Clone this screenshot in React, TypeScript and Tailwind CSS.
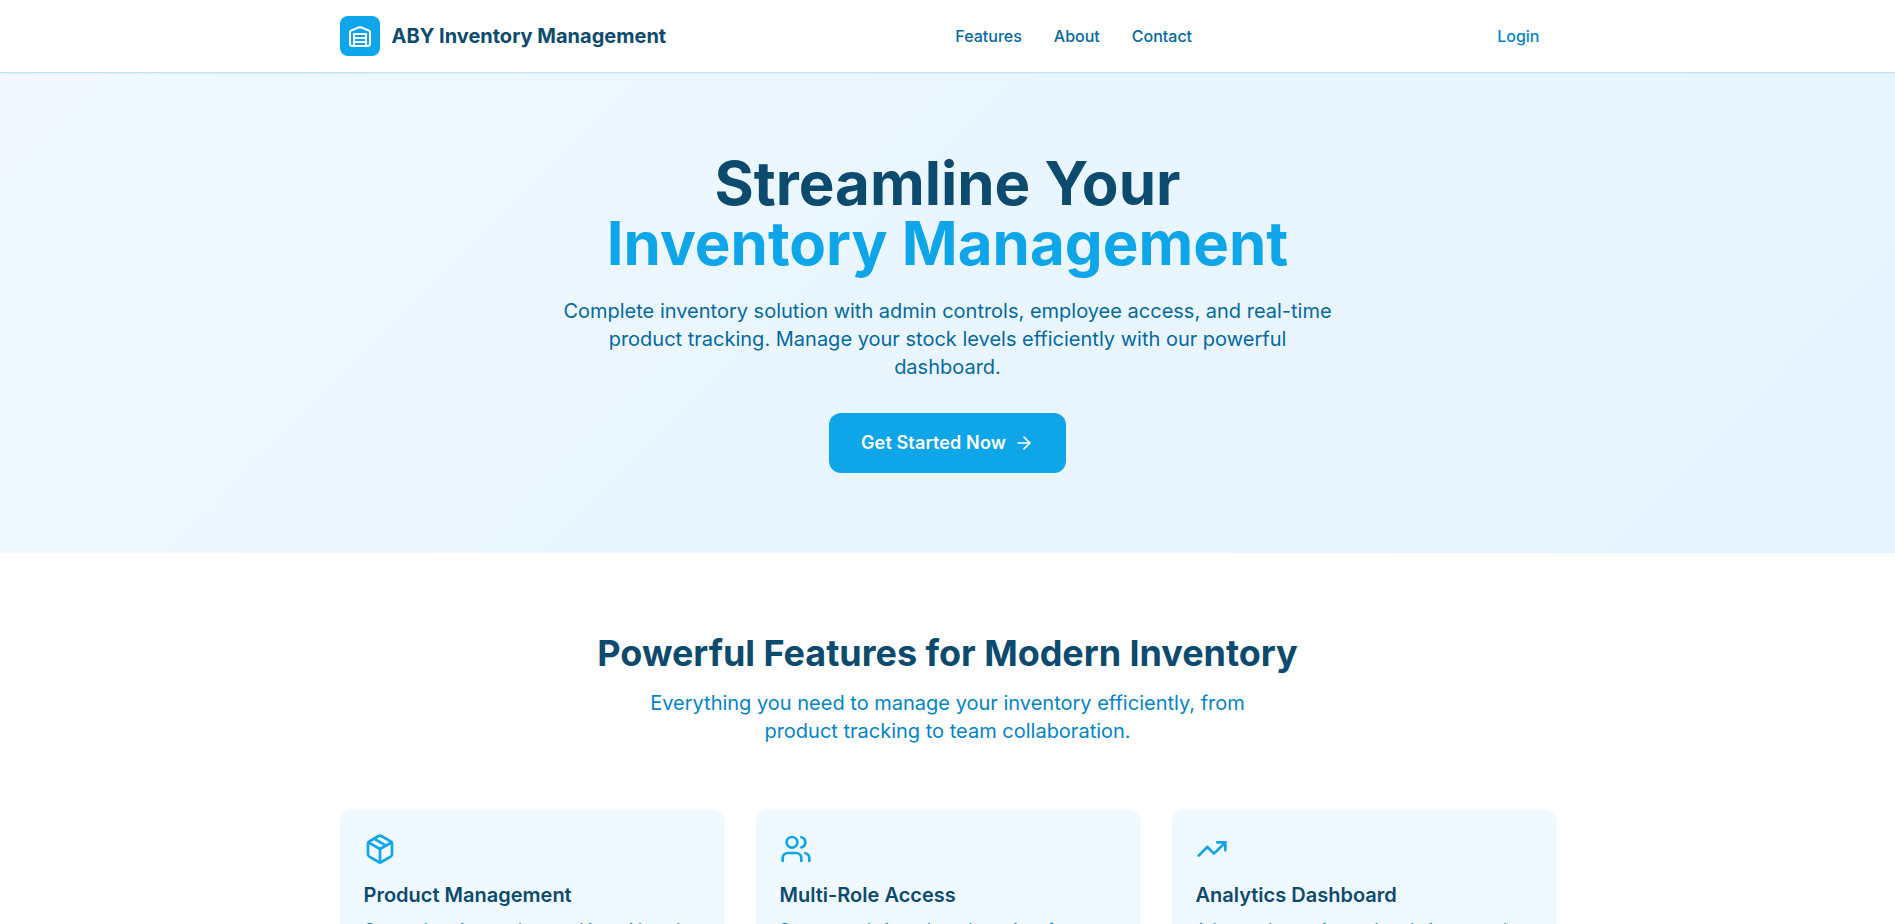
import React from "react";
import { ArrowRight, Package, TrendingUp, Users, type LucideIcon } from "lucide-react";

type Feature = { icon: LucideIcon; title: string; text: string };

const features: Feature[] = [
  {
    icon: Package,
    title: "Product Management",
    text: "Comprehensive product tracking with real-time stock levels and product details.",
  },
  {
    icon: Users,
    title: "Multi-Role Access",
    text: "Separate admin and employee interfaces with role-based permissions.",
  },
  {
    icon: TrendingUp,
    title: "Analytics Dashboard",
    text: "Advanced reporting and analytics to track performance and trends.",
  },
];

function WarehouseIcon() {
  return (
    <svg
      className="h-6 w-6 text-white"
      viewBox="0 0 24 24"
      fill="none"
      stroke="currentColor"
      strokeWidth="2"
      strokeLinecap="round"
      strokeLinejoin="round"
    >
      <path d="M22 8.35V20a2 2 0 0 1-2 2H4a2 2 0 0 1-2-2V8.35A2 2 0 0 1 3.26 6.5l8-3.2a2 2 0 0 1 1.48 0l8 3.2A2 2 0 0 1 22 8.35Z" />
      <path d="M6 18h12" />
      <path d="M6 14h12" />
      <rect width="12" height="12" x="6" y="10" />
    </svg>
  );
}

export default function App() {
  return (
    <div className="h-[924px] overflow-hidden bg-white font-['Inter',sans-serif]">
      <header className="relative border-b border-[#bae6fd] bg-white shadow-xs">
        <div className="mx-auto flex max-w-7xl items-center justify-between px-8 py-4">
          <div className="flex items-center gap-3">
            <div className="flex h-10 w-10 items-center justify-center rounded-lg bg-[#0ea5e9]">
              <WarehouseIcon />
            </div>
            <span className="text-xl font-bold text-[#0c4a6e]">ABY Inventory Management</span>
          </div>
          <nav className="flex items-center gap-8 font-medium text-[#0369a1]">
            <a href="#features">Features</a>
            <a href="#about">About</a>
            <a href="#contact">Contact</a>
          </nav>
          <a href="#login" className="px-4 py-2 font-medium text-[#0284c7]">
            Login
          </a>
        </div>
      </header>

      <section className="bg-[linear-gradient(135deg,#f1f9ff_0%,#eaf6ff_45%,#e6f4fe_100%)] py-20">
        <div className="mx-auto max-w-7xl px-8 text-center">
          <h1 className="mb-6 text-6xl leading-none font-bold text-[#0c4a6e]">
            Streamline Your
            <span className="block text-[#0ea5e9]">Inventory Management</span>
          </h1>
          <p className="mx-auto mb-8 max-w-[776px] text-xl text-[#0369a1]">
            Complete inventory solution with admin controls, employee access, and real-time
            <br />
            product tracking. Manage your stock levels efficiently with our powerful
            <br />
            dashboard.
          </p>
          <button className="inline-flex items-center rounded-xl bg-[#0ea5e9] px-8 py-4 align-top text-lg font-semibold tracking-[0.13px] text-white">
            Get Started Now
            <ArrowRight className="ml-2 h-5 w-5" />
          </button>
        </div>
      </section>

      <section className="bg-white py-20">
        <div className="mx-auto max-w-7xl px-8">
          <div className="mb-16 text-center">
            <h2 className="mb-4 text-4xl font-bold tracking-[-0.04px] text-[#0c4a6e]">
              Powerful Features for Modern Inventory
            </h2>
            <p className="mx-auto max-w-2xl text-xl text-[#0284c7]">
              Everything you need to manage your inventory efficiently, from product tracking to team
              collaboration.
            </p>
          </div>
          <div className="grid grid-cols-3 gap-8">
            {features.map(({ icon: Icon, title, text }) => (
              <div key={title} className="rounded-xl bg-[#f0f9ff] p-6">
                <Icon className="mb-4 h-8 w-8 text-[#0ea5e9]" />
                <h3 className="mb-2 text-xl font-semibold text-[#0c4a6e]">{title}</h3>
                <p className="text-[#0284c7]">{text}</p>
              </div>
            ))}
          </div>
        </div>
      </section>
    </div>
  );
}
